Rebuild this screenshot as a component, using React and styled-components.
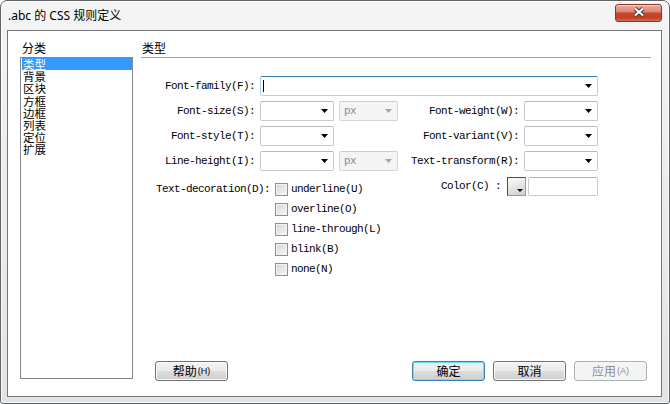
import styled, { createGlobalStyle } from 'styled-components';

const GlobalStyle = createGlobalStyle`
  html, body {
    margin: 0;
    padding: 0;
    background: #fff;
  }
  body {
    font-family: "Noto Sans", "Noto Sans CJK SC", sans-serif;
  }
  * {
    box-sizing: border-box;
  }
`;

const cjk = `"Noto Sans CJK SC", sans-serif`;
const mono = `"Liberation Mono", "Noto Sans CJK SC", monospace`;

const Window = styled.div`
  width: 670px;
  height: 404px;
  display: flex;
  flex-direction: column;
  border: 1px solid #5f6366;
  border-radius: 7px 7px 3px 3px;
  background: linear-gradient(#f4f4f4, #e3e3e3);
  box-shadow: inset 0 0 0 1px rgba(255, 255, 255, 0.85);
  overflow: hidden;
`;

const TitleBar = styled.div`
  flex: none;
  height: 29px;
  display: flex;
  align-items: center;
  padding: 0 7px 0 7px;
`;

const Title = styled.div`
  font-size: 12px;
  line-height: 16px;
  color: #000;
  white-space: nowrap;
`;

const CloseButton = styled.div`
  align-self: flex-start;
  margin: 3px 0 0 auto;
  width: 47px;
  height: 18px;
  display: flex;
  justify-content: center;
  align-items: flex-start;
  padding-top: 1px;
  border: 1px solid #86392a;
  border-radius: 3px;
  background: linear-gradient(
    #eaab9c 0%,
    #de8a77 40%,
    #c9452d 52%,
    #c23f27 80%,
    #d4715a 100%
  );
  box-shadow: inset 0 1px 0 rgba(255, 255, 255, 0.45);
`;

const Client = styled.div`
  flex: 1;
  margin: 0 7px 6px 6px;
  border: 1px solid #767676;
  background: #fff;
  display: grid;
  grid-template-columns: 113px 1fr;
  column-gap: 8px;
  padding: 11px 10px 15px 12px;
  min-height: 0;
`;

const Sidebar = styled.div`
  display: flex;
  flex-direction: column;
  padding-bottom: 2px;
  min-height: 0;
`;

const SectionLabel = styled.div`
  font-family: ${cjk};
  font-size: 12px;
  line-height: 12px;
  padding: 0 0 3px 2px;
  color: #000;
`;

const CategoryList = styled.ul`
  flex: 1;
  margin: 0;
  padding: 0 0 0 1px;
  list-style: none;
  border: 1px solid #828790;
`;

const CategoryItem = styled.li`
  height: 12.2px;
  line-height: 12.2px;
  padding-left: 1px;
  font-family: ${cjk};
  font-size: 11.5px;
  color: ${({ $selected }) => ($selected ? '#fff' : '#000')};
  background: ${({ $selected }) => ($selected ? '#3399ff' : 'transparent')};
`;

const Panel = styled.div`
  display: flex;
  flex-direction: column;
  min-height: 0;
`;

const PanelHeading = styled.div`
  font-family: ${cjk};
  font-size: 12px;
  line-height: 12px;
  padding: 0 0 3px 1px;
  border-bottom: 1px solid #a0a0a0;
  color: #000;
`;

const Form = styled.div`
  margin-top: 18px;
  width: 457px;
  display: grid;
  grid-template-columns: 114px 74px 59px 116px 74px;
  grid-auto-rows: 20px;
  column-gap: 5px;
  row-gap: 5px;
`;

const Label = styled.div`
  font-family: ${mono};
  font-size: 11px;
  letter-spacing: -0.6px;
  line-height: 20px;
  text-align: right;
  white-space: nowrap;
  color: #000;
  grid-column: ${({ $col }) => $col || 'auto'};
`;

const TextField = styled.div`
  grid-column: ${({ $span }) => $span || 'auto'};
  height: ${({ $height }) => $height || 20}px;
  width: ${({ $width }) => ($width ? `${$width}px` : 'auto')};
  display: flex;
  align-items: center;
  justify-content: space-between;
  padding: 0 5px 0 2px;
  border: 1px solid ${({ $focused }) => ($focused ? '#b3cfe8' : '#cacaca')};
  border-top-color: ${({ $focused }) => ($focused ? '#3d7bad' : '#b5b5b5')};
  border-radius: 2px;
  background: #fff;
`;

const Caret = styled.span`
  width: 1px;
  height: 12px;
  background: #000;
`;

const Select = styled.div`
  grid-column: ${({ $col }) => $col || 'auto'};
  height: 20px;
  display: flex;
  align-items: center;
  justify-content: space-between;
  padding: 0 5px 0 4px;
  border: 1px solid ${({ $disabled }) => ($disabled ? '#d6d6d6' : '#c8c8c8')};
  border-top-color: ${({ $disabled }) => ($disabled ? '#cdcdcd' : '#b8b8b8')};
  border-radius: 2px;
  background: ${({ $disabled }) => ($disabled ? '#f4f4f4' : '#fff')};
  font-family: ${mono};
  font-size: 11px;
  letter-spacing: -0.6px;
  color: #8a8a8a;
`;

const DecorationRow = styled.div`
  margin-top: 6px;
  width: 457px;
  display: flex;
  align-items: flex-start;
`;

const DecorationLabel = styled(Label)`
  flex: none;
  width: 129px;
  margin-top: 2px;
`;

const CheckList = styled.div`
  margin: 2px 0 0 5px;
  display: flex;
  flex-direction: column;
`;

const CheckRow = styled.label`
  height: 20px;
  display: flex;
  align-items: center;
  gap: 3px;
  font-family: ${mono};
  font-size: 11px;
  letter-spacing: -0.6px;
  color: #000;
  white-space: nowrap;
`;

const CheckBox = styled.span`
  width: 13px;
  height: 13px;
  border: 1px solid #8e8f8f;
  background: linear-gradient(135deg, #d6d6d6, #f7f7f7);
  box-shadow: inset 0 0 0 1px #f4f4f4;
`;

const ColorGroup = styled.div`
  margin-left: auto;
  height: 19px;
  display: flex;
  align-items: center;
`;

const ColorLabel = styled(Label)`
  margin-right: 6px;
  line-height: 19px;
`;

const Swatch = styled.div`
  width: 19px;
  height: 19px;
  margin-right: 2px;
  display: flex;
  align-items: flex-end;
  justify-content: flex-end;
  padding: 0 2px 3px 0;
  border: 1px solid;
  border-color: #4d4d4d #9a9a9a #9a9a9a #4d4d4d;
  background: linear-gradient(160deg, #fdfdfd, #cdcdcd);
`;

const SwatchArrow = styled.span`
  border-left: 3px solid transparent;
  border-right: 3px solid transparent;
  border-top: 3px solid #000;
`;

const ButtonBar = styled.div`
  margin-top: auto;
  display: flex;
  gap: 8px;
  padding: 0 4px 0 14px;
`;

const Button = styled.div`
  width: 73px;
  height: 20px;
  display: flex;
  align-items: center;
  justify-content: center;
  margin-right: ${({ $pushRight }) => ($pushRight ? 'auto' : '0')};
  border: 1px solid
    ${({ $variant }) =>
      $variant === 'default' ? '#3c7fb1' : $variant === 'disabled' ? '#adb2b5' : '#707070'};
  border-radius: 3px;
  background: ${({ $variant }) =>
    $variant === 'disabled'
      ? '#f4f4f4'
      : 'linear-gradient(#f2f2f2 0%, #ebebeb 50%, #dddddd 50%, #cfcfcf 100%)'};
  box-shadow: inset 0 0 0 1px
    ${({ $variant }) =>
      $variant === 'default' ? '#6fdcf8' : $variant === 'disabled' ? '#f4f4f4' : '#fbfbfb'};
  font-family: ${cjk};
  font-size: 12px;
  line-height: 16px;
  color: ${({ $variant }) => ($variant === 'disabled' ? '#8d8d8d' : '#000')};
  white-space: nowrap;
`;

const Accel = styled.span`
  font-family: "Liberation Sans", sans-serif;
  font-size: 9px;
  margin-left: 1px;
`;

const Arrow = ({ color = '#000' }) => (
  <svg width="7" height="4" viewBox="0 0 7 4">
    <polygon points="0,0 7,0 3.5,4" fill={color} />
  </svg>
);

const CloseGlyph = () => (
  <svg width="14" height="12" viewBox="0 0 14 12">
    <path d="M3 2.5 L11 9.5 M11 2.5 L3 9.5" stroke="#3a3a3a" strokeWidth="4.2" />
    <path d="M3 2.5 L11 9.5 M11 2.5 L3 9.5" stroke="#fff" strokeWidth="2.2" />
  </svg>
);

const categories = ['类型', '背景', '区块', '方框', '边框', '列表', '定位', '扩展'];

const decorations = ['underline(U)', 'overline(O)', 'line-through(L)', 'blink(B)', 'none(N)'];

export default function App() {
  return (
    <>
      <GlobalStyle />
      <Window>
        <TitleBar>
          <Title>.abc 的 CSS 规则定义</Title>
          <CloseButton>
            <CloseGlyph />
          </CloseButton>
        </TitleBar>
        <Client>
          <Sidebar>
            <SectionLabel>分类</SectionLabel>
            <CategoryList>
              {categories.map((name, i) => (
                <CategoryItem key={name} $selected={i === 0}>
                  {name}
                </CategoryItem>
              ))}
            </CategoryList>
          </Sidebar>
          <Panel>
            <PanelHeading>类型</PanelHeading>
            <Form>
              <Label>Font-family(F):</Label>
              <TextField $span="2 / -1" $focused>
                <Caret />
                <Arrow />
              </TextField>

              <Label>Font-size(S):</Label>
              <Select>
                <span />
                <Arrow />
              </Select>
              <Select $disabled>
                <span>px</span>
                <Arrow color="#a6a6a6" />
              </Select>
              <Label>Font-weight(W):</Label>
              <Select>
                <span />
                <Arrow />
              </Select>

              <Label>Font-style(T):</Label>
              <Select>
                <span />
                <Arrow />
              </Select>
              <Label $col="4">Font-variant(V):</Label>
              <Select>
                <span />
                <Arrow />
              </Select>

              <Label>Line-height(I):</Label>
              <Select>
                <span />
                <Arrow />
              </Select>
              <Select $disabled>
                <span>px</span>
                <Arrow color="#a6a6a6" />
              </Select>
              <Label>Text-transform(R):</Label>
              <Select>
                <span />
                <Arrow />
              </Select>
            </Form>

            <DecorationRow>
              <DecorationLabel>Text-decoration(D):</DecorationLabel>
              <CheckList>
                {decorations.map(d => (
                  <CheckRow key={d}>
                    <CheckBox />
                    {d}
                  </CheckRow>
                ))}
              </CheckList>
              <ColorGroup>
                <ColorLabel>Color(C) :</ColorLabel>
                <Swatch>
                  <SwatchArrow />
                </Swatch>
                <TextField $width={70} $height={19} />
              </ColorGroup>
            </DecorationRow>

            <ButtonBar>
              <Button $pushRight>
                帮助<Accel>(H)</Accel>
              </Button>
              <Button $variant="default">确定</Button>
              <Button>取消</Button>
              <Button $variant="disabled">
                应用<Accel>(A)</Accel>
              </Button>
            </ButtonBar>
          </Panel>
        </Client>
      </Window>
    </>
  );
}
